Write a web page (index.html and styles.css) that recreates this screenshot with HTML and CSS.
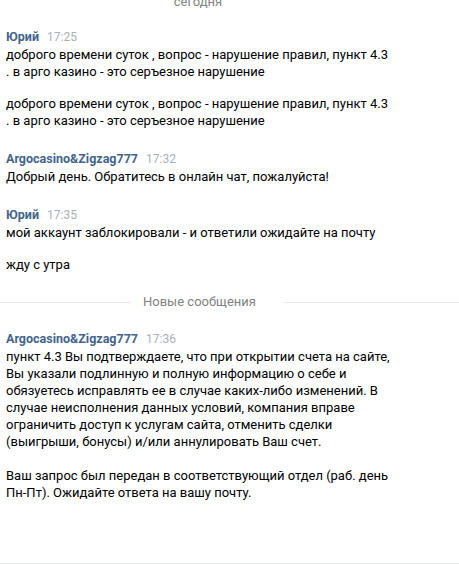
FILE: index.html
```html
<!DOCTYPE html>
<html>
<head>
    <title>Чат</title>
    <link rel="stylesheet" href="styles.css">
</head>
<body>

<div class="chat">
    <div class="day-label">сегодня</div>

    <div class="msg-group">
        <div class="head"><span class="author">Юрий</span><span class="time">17:25</span></div>
        <div class="msg">доброго времени суток , вопрос - нарушение правил, пункт 4.3<br>. в арго казино - это серъезное нарушение</div>
        <div class="msg">доброго времени суток , вопрос - нарушение правил, пункт 4.3<br>. в арго казино - это серъезное нарушение</div>
    </div>

    <div class="msg-group">
        <div class="head"><span class="author">Argocasino&amp;Zigzag777</span><span class="time">17:32</span></div>
        <div class="msg">Добрый день. Обратитесь в онлайн чат, пожалуйста!</div>
    </div>

    <div class="msg-group">
        <div class="head"><span class="author">Юрий</span><span class="time">17:35</span></div>
        <div class="msg">мой аккаунт заблокировали - и ответили ожидайте на почту</div>
        <div class="msg">жду с утра</div>
    </div>

    <!-- unread divider -->
    <div class="new-divider">
        <span class="line"></span>
        <span class="label">Новые сообщения</span>
        <span class="line"></span>
    </div>

    <div class="msg-group unread">
        <div class="head"><span class="author">Argocasino&amp;Zigzag777</span><span class="time">17:36</span></div>
        <div class="msg">пункт 4.3 Вы подтверждаете, что при открытии счета на сайте,<br>Вы указали подлинную и полную информацию о себе и<br>обязуетесь исправлять ее в случае каких-либо изменений. В<br>случае неисполнения данных условий, компания вправе<br>ограничить доступ к услугам сайта, отменить сделки<br>(выигрыши, бонусы) и/или аннулировать Ваш счет.</div>
        <div class="msg">Ваш запрос был передан в соответствующий отдел (раб. день<br>Пн-Пт). Ожидайте ответа на вашу почту.</div>
    </div>
</div>

</body>
</html>
```

FILE: styles.css
```css
/* Basic styling */
body {
    margin: 0;
    background: #fff;
    font-family: Roboto, "Open Sans", Arial, sans-serif;
    font-size: 13px;
    color: #000;
}
.chat {
    height: 563px;
    border-bottom: 1px solid #e7e8ec;
    overflow: hidden;
}
.day-label {
    width: 396px;
    margin: -7px 0 -4px;
    text-align: center;
    color: #828282;
    line-height: 18px;
}
.msg-group {
    padding: 21px 0 0 6px;
}
.msg-group.unread {
    padding-top: 19px;
}
.head {
    line-height: 18px;
}
.author {
    font-weight: 700;
    font-size: 12.5px;
    color: #42648b;
}
.time {
    margin-left: 8px;
    font-size: 12px;
    color: #aab0b7;
}
.msg {
    line-height: 17px;
    white-space: nowrap;
}
.msg + .msg {
    margin-top: 15px;
}
.unread .msg + .msg {
    margin-top: 17px;
}
.new-divider {
    display: grid;
    grid-template-columns: 131px auto 175px;
    align-items: center;
    gap: 12px;
    margin-top: 20px;
}
.new-divider .line {
    height: 1px;
    background: #e7e8ec;
}
.new-divider .label {
    color: #828282;
    line-height: 18px;
}
```
